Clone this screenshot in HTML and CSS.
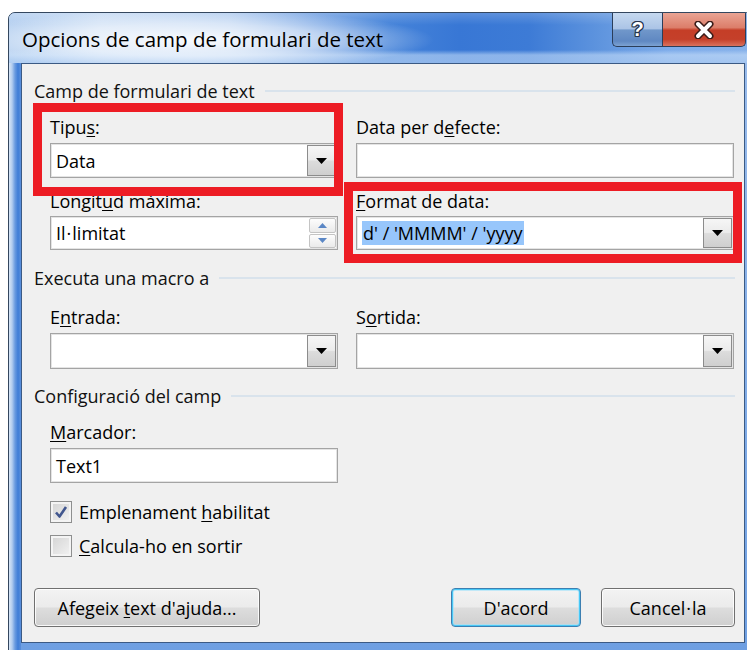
FILE: index.html
```html
<!DOCTYPE html>
<html>
<head>
<meta charset="utf-8">
<title>Opcions de camp de formulari de text</title>
<link rel="stylesheet" href="styles.css">
</head>
<body>
<div class="window">
  <div class="titlebar">
    <span class="title">Opcions de camp de formulari de text</span>
    <div class="caption">
      <button class="cap cap-help" type="button" aria-label="Ajuda"><span class="cap-q">?</span></button>
      <button class="cap cap-close" type="button" aria-label="Tanca">
        <svg width="22" height="18" viewBox="0 0 22 18">
          <path d="M5 3 L17 15 M17 3 L5 15" stroke="#3b1c18" stroke-width="7" stroke-linecap="round" fill="none"/>
          <path d="M5 3 L17 15 M17 3 L5 15" stroke="#ffffff" stroke-width="4" stroke-linecap="round" fill="none"/>
        </svg>
      </button>
    </div>
  </div>

  <div class="client">
    <div class="group-head"><span>Camp de formulari de text</span><i class="rule"></i></div>

    <div class="pair gap-14">
      <span class="lbl">Tipu<u>s</u>:</span>
      <span class="lbl">Data per d<u>e</u>fecte:</span>
    </div>
    <div class="pair gap-5">
      <div class="combo h35">
        <span class="val">Data</span>
        <span class="drop"><svg width="11" height="6" viewBox="0 0 11 6"><polygon points="0,0 11,0 5.5,6" fill="#000"/></svg></span>
      </div>
      <div class="textbox h35"></div>
    </div>

    <div class="pair gap-12">
      <span class="lbl">Longit<u>u</u>d màxima:</span>
      <span class="lbl"><u>F</u>ormat de data:</span>
    </div>
    <div class="pair gap-4">
      <div class="spin h34">
        <span class="val">Il<span class="dot">·</span>limitat</span>
        <span class="spin-btns">
          <span><svg width="9" height="5" viewBox="0 0 9 5"><polygon points="0,5 9,5 4.5,0" fill="#5b87c5"/></svg></span>
          <span><svg width="9" height="5" viewBox="0 0 9 5"><polygon points="0,0 9,0 4.5,5" fill="#5b87c5"/></svg></span>
        </span>
      </div>
      <div class="combo h34">
        <span class="val"><span class="sel">d' / 'MMMM' / 'yyyy</span></span>
        <span class="drop"><svg width="11" height="6" viewBox="0 0 11 6"><polygon points="0,0 11,0 5.5,6" fill="#000"/></svg></span>
      </div>
    </div>

    <div class="group-head gap-17"><span>Executa una macro a</span><i class="rule"></i></div>

    <div class="pair gap-17">
      <span class="lbl">E<u>n</u>trada:</span>
      <span class="lbl">S<u>o</u>rtida:</span>
    </div>
    <div class="pair gap-5">
      <div class="combo h36">
        <span class="val"></span>
        <span class="drop"><svg width="11" height="6" viewBox="0 0 11 6"><polygon points="0,0 11,0 5.5,6" fill="#000"/></svg></span>
      </div>
      <div class="combo h36">
        <span class="val"></span>
        <span class="drop"><svg width="11" height="6" viewBox="0 0 11 6"><polygon points="0,0 11,0 5.5,6" fill="#000"/></svg></span>
      </div>
    </div>

    <div class="group-head gap-16"><span>Configuració del camp</span><i class="rule"></i></div>

    <div class="pair gap-14">
      <span class="lbl"><u>M</u>arcador:</span>
    </div>
    <div class="pair gap-5">
      <div class="textbox h35"><span class="val">Text1</span></div>
    </div>

    <div class="check gap-18">
      <span class="box">
        <svg width="16" height="16" viewBox="0 0 16 16"><path d="M3 8.5 L6.5 12.5 L13 3" stroke="#41568e" stroke-width="2.6" fill="none" stroke-linejoin="round"/></svg>
      </span>
      <span>Emplenament <u>h</u>abilitat</span>
    </div>
    <div class="check gap-12">
      <span class="box"></span>
      <span><u>C</u>alcula-ho en sortir</span>
    </div>

    <div class="buttons">
      <button class="btn btn-help" type="button">Afegeix <u>t</u>ext d'ajuda...</button>
      <div class="btn-group">
        <button class="btn btn-ok" type="button">D'acord</button>
        <button class="btn btn-cancel" type="button">Cancel<span class="dot">·</span>la</button>
      </div>
    </div>

    <div class="mark mark-type"></div>
    <div class="mark mark-format"></div>
  </div>
</div>
</body>
</html>
```

FILE: styles.css
```css
* { box-sizing: border-box; }

html, body {
  margin: 0;
  padding: 0;
  overflow: hidden;
  background: #ffffff;
}

body {
  font-family: "Open Sans", "Noto Sans", sans-serif;
  font-size: 18px;
  line-height: 22px;
  color: #000;
  font-kerning: none;
}

u { text-decoration-thickness: 1px; text-underline-offset: 2px; }

/* the Catalan middle dot gets a little air on each side */
.dot { padding: 0 1px; }

/* ---------- window frame ---------- */
.window {
  width: 744px;
  height: 640px;
  margin: 12px 0 0 8px;
  border: 1px solid #34475f;
  border-radius: 7px 7px 0 0;
  display: flex;
  flex-direction: column;
  overflow: hidden;
  background-color: #86afe7;
  background-image:
    linear-gradient(to right, #d6e5f6 0, #b3cdef 3px, #6a9be0 6px, #3f7dd7 9px, #5b90dc 12px),
    linear-gradient(to bottom, #9bbdec, #6e9fe2);
  background-size: 12px 100%, 100% 100%;
  background-repeat: no-repeat;
}

.titlebar {
  height: 50px;
  flex: none;
  display: flex;
  justify-content: space-between;
  align-items: flex-start;
  padding: 0 5px 0 13px;
  background:
    radial-gradient(ellipse 240px 30px at 185px 27px, rgba(255,255,255,.92), rgba(255,255,255,.55) 55%, rgba(255,255,255,0) 100%),
    linear-gradient(to bottom, rgba(255,255,255,.18) 0, rgba(255,255,255,0) 12px, rgba(255,255,255,0) 37px, rgba(196,220,248,.6) 42px, rgba(176,206,243,.7) 50px),
    linear-gradient(to right, #b4cff0 0, #c4d9f3 90px, #a9c7ee 220px, #70a0e3 310px, #4583d9 380px, #3877d5 450px, #3d7bd6 520px, #5e94de 590px, #7eacea 660px, #88b2ea 742px);
}

.title {
  margin-top: 14px;
  font-size: 20.5px;
  line-height: 24px;
  color: #000;
  white-space: nowrap;
}

.caption { display: flex; }

.cap {
  height: 34px;
  margin: 0;
  padding: 0;
  border: 1px solid #2b3e5a;
  border-top: none;
  display: flex;
  align-items: center;
  justify-content: center;
}

.cap-help {
  width: 50px;
  border-right: none;
  border-radius: 0 0 0 5px;
  background: linear-gradient(#c6d9f0 0, #abc4e6 47%, #7097ca 52%, #5f88c2 85%, #7ca2d3 100%);
}

.cap-q {
  font-family: "Liberation Sans", "DejaVu Sans", sans-serif;
  font-weight: bold;
  font-size: 20px;
  color: #fff;
  text-shadow: 1px 0 0 #26364e, -1px 0 0 #26364e, 0 1px 0 #26364e, 0 -1px 0 #26364e,
               1px 1px 0 #26364e, -1px -1px 0 #26364e, 1px -1px 0 #26364e, -1px 1px 0 #26364e;
}

.cap-close {
  width: 84px;
  border-radius: 0 0 5px 0;
  background: linear-gradient(#eaa494 0, #dc7e6a 44%, #c53e27 52%, #c5402a 80%, #da725d 100%);
}

/* ---------- client area ---------- */
.client {
  flex: 1;
  position: relative;
  margin: 0 6px 8px 12px;
  padding: 16px 9px 0 12px;
  border: 1px solid #3b5a84;
  background: #f0f0f0;
  display: flex;
  flex-direction: column;
}

.group-head {
  display: flex;
  align-items: center;
  gap: 10px;
  height: 22px;
  color: #111;
  white-space: nowrap;
}

.group-head .rule {
  flex: 1;
  height: 2px;
  background: #d9e3ec;
}

.pair {
  display: grid;
  grid-template-columns: 288px 378px;
  column-gap: 18px;
  margin-left: 16px;
}

.lbl { height: 22px; white-space: nowrap; }

.gap-4 { margin-top: 4px; }
.gap-5 { margin-top: 5px; }
.gap-12 { margin-top: 12px; }
.gap-14 { margin-top: 14px; }
.gap-16 { margin-top: 16px; }
.gap-17 { margin-top: 17px; }
.gap-18 { margin-top: 18px; }

.h34 { height: 34px; }
.h35 { height: 35px; }
.h36 { height: 36px; }

.textbox, .combo, .spin {
  border: 1px solid #a4a4a4;
  box-shadow: inset 0 0 0 1px #e4e4e4;
  background: #fff;
  display: flex;
  align-items: center;
  padding: 1px;
}

.val {
  flex: 1;
  padding-left: 4px;
  white-space: nowrap;
}

.drop {
  width: 29px;
  align-self: stretch;
  border: 1px solid #8c8c8c;
  background: linear-gradient(#f6f6f6 0, #ebebeb 48%, #dcdcdc 52%, #cfcfcf 100%);
  display: flex;
  align-items: center;
  justify-content: center;
}

.sel {
  background: #97c6fb;
  padding: 0 1px;
}

.spin-btns {
  width: 27px;
  align-self: stretch;
  display: flex;
  flex-direction: column;
  gap: 1px;
}

.spin-btns span {
  flex: 1;
  border: 1px solid #c4c4c4;
  border-radius: 2px;
  background: linear-gradient(#fdfdfd, #eaeaea);
  display: flex;
  align-items: center;
  justify-content: center;
}

/* ---------- checkboxes ---------- */
.check {
  display: flex;
  align-items: center;
  gap: 7px;
  height: 22px;
  margin-left: 16px;
  white-space: nowrap;
}

.box {
  width: 22px;
  height: 22px;
  flex: none;
  border: 1px solid #8e8f8f;
  box-shadow: inset 0 0 0 2px #f4f4f4;
  background: linear-gradient(135deg, #d3d3d3, #f3f3f3);
  display: flex;
  align-items: center;
  justify-content: center;
}

/* ---------- buttons ---------- */
.buttons {
  display: flex;
  justify-content: space-between;
  margin-top: 31px;
}

.btn-group { display: flex; gap: 20px; }

.btn {
  height: 39px;
  margin: 0;
  padding: 0;
  font: inherit;
  color: #000;
  border: 1px solid #707070;
  border-radius: 4px;
  background: linear-gradient(#f3f3f3 0, #ebebeb 49%, #dddddd 51%, #cfcfcf 100%);
  box-shadow: inset 0 0 0 1px rgba(255,255,255,.85);
}

.btn-help { width: 226px; }
.btn-ok { width: 130px; border-color: #3c7fb1; box-shadow: inset 0 0 0 1px #48c8f6, inset 0 0 0 2px rgba(160,225,250,.6); }
.btn-cancel { width: 134px; }

/* ---------- red highlight frames drawn over the form ---------- */
.mark {
  position: absolute;
  border: 9px solid #ed1c24;
  pointer-events: none;
}

.mark-type {
  left: 11px;
  top: 39px;
  width: 310px;
  height: 93px;
}

.mark-format {
  left: 322px;
  top: 118px;
  width: 398px;
  height: 81px;
}
```
